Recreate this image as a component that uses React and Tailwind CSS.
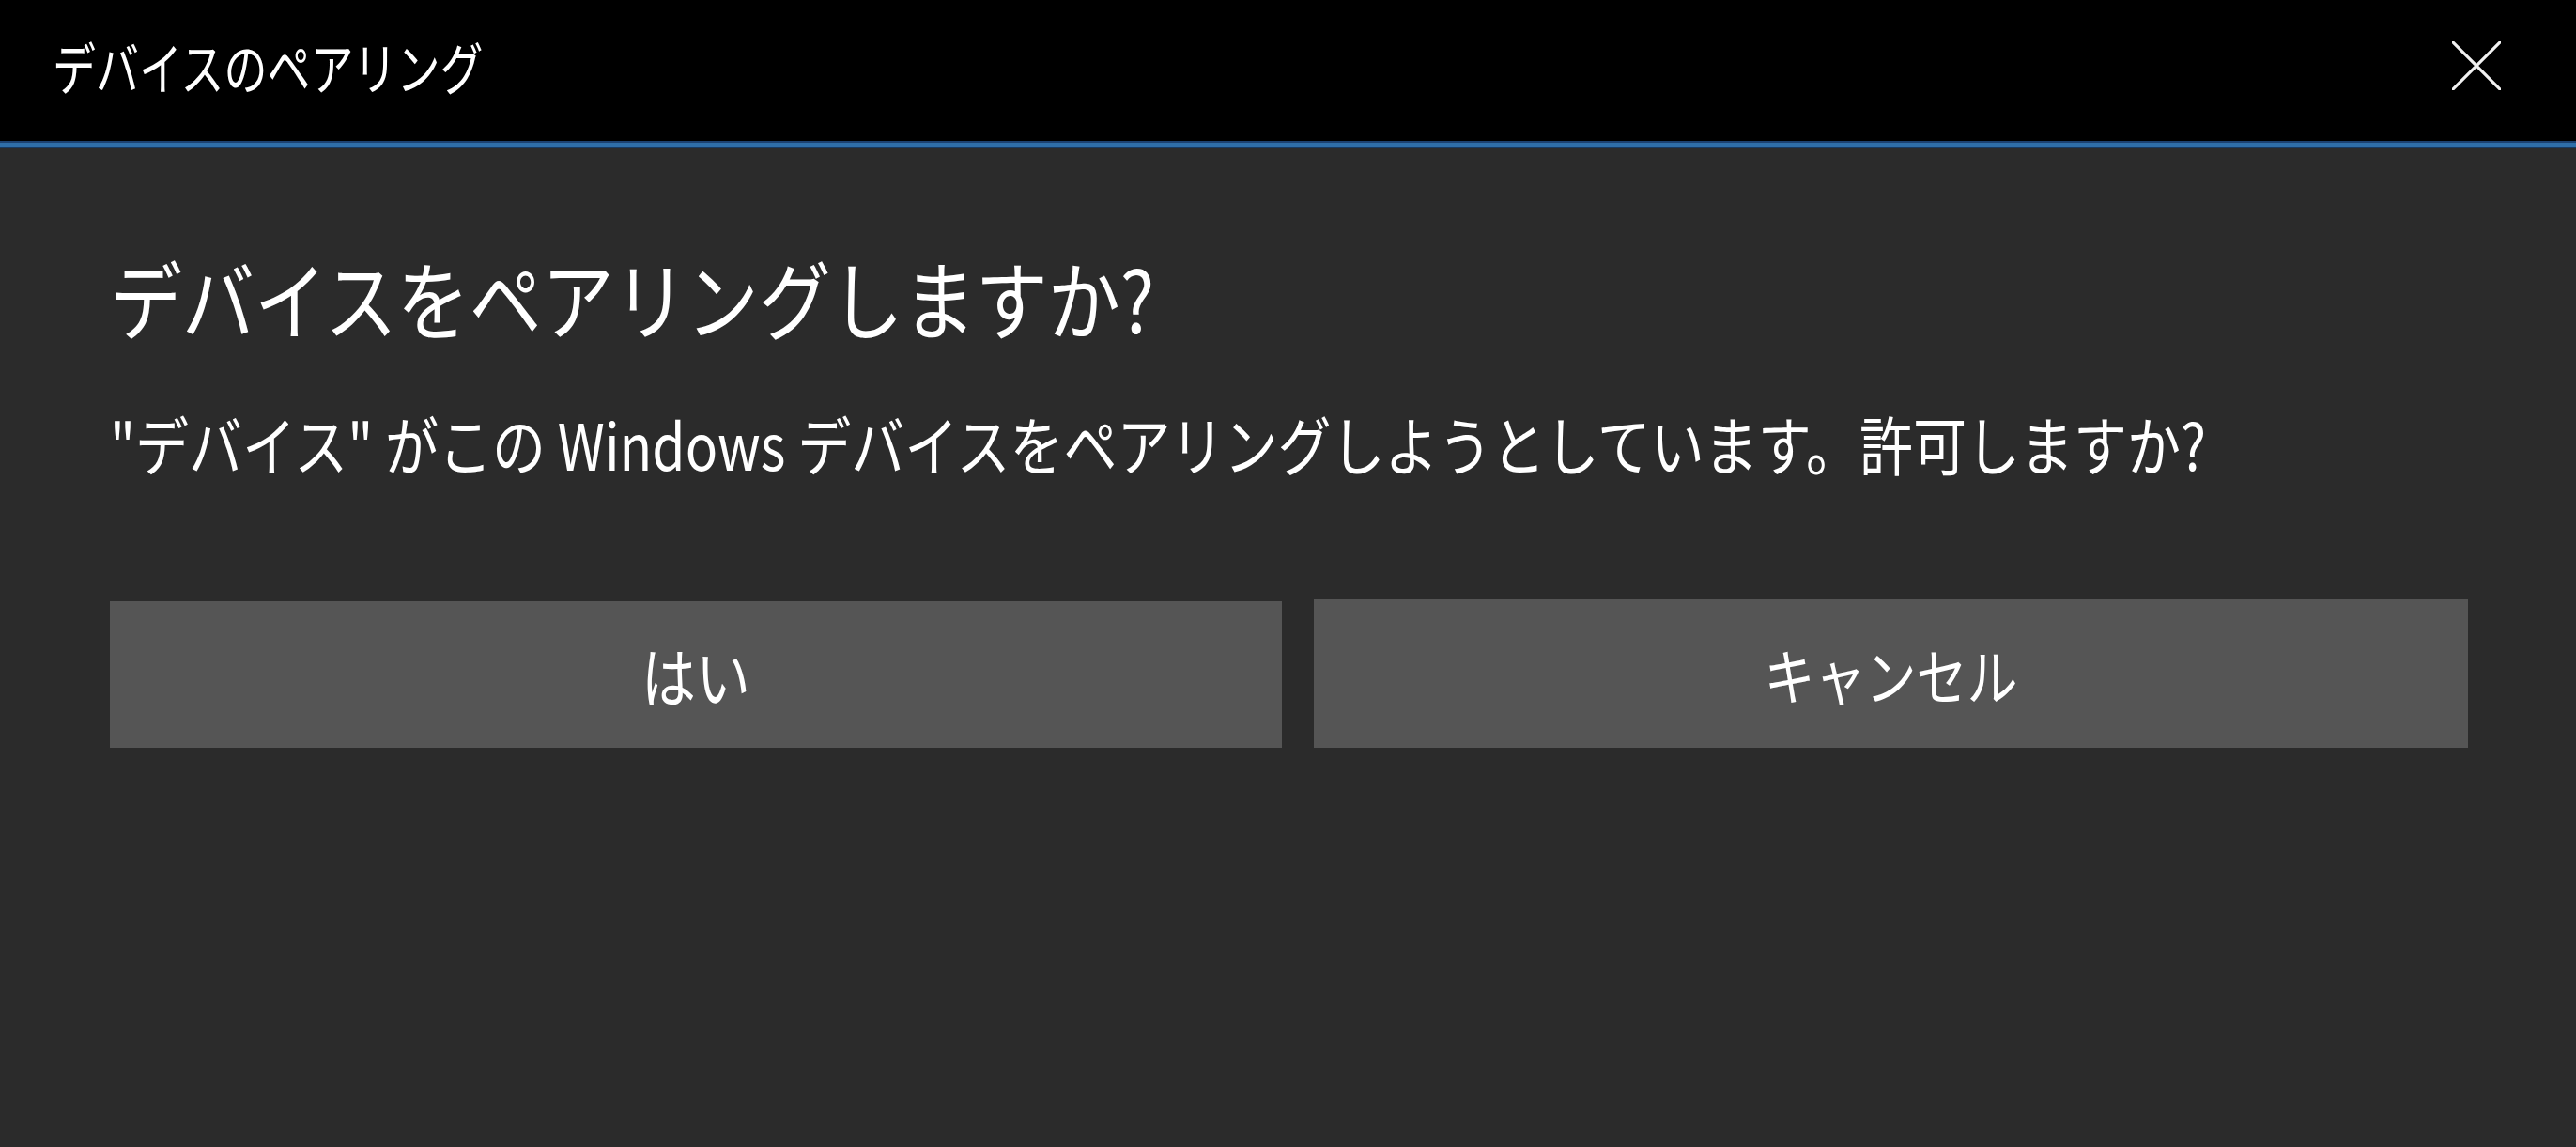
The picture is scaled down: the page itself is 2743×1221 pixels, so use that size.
export default function App() {
  const jp = { fontFamily: '"Noto Sans CJK JP", "Noto Sans", sans-serif' };

  return (
    <div
      className="w-[2743px] h-[1221px] bg-[#2b2b2b] flex flex-col overflow-hidden text-white"
      style={jp}
    >
      {/* title bar */}
      <div className="h-[150px] bg-black flex items-center justify-between pl-[56px] pr-[80px]">
        <span className="inline-block text-[46px] leading-none pb-[8px] text-white scale-y-[1.3] origin-center">
          デバイスのペアリング
        </span>
        <button className="w-[52px] h-[52px] flex items-center justify-center mb-[10px]">
          <svg width="52" height="52" viewBox="0 0 52 52" fill="none">
            <path d="M1 1 L51 51 M51 1 L1 51" stroke="#f2f2f2" strokeWidth="3.2" strokeLinecap="round" />
          </svg>
        </button>
      </div>
      <div className="h-[8px] bg-[#2f6ea8] border-t-[2px] border-b-[2px] border-t-[#1c4170] border-b-[#173a63]" />

      {/* content */}
      <div className="flex flex-col items-start px-[117px]">
        <h1 className="inline-block mt-[119px] text-[77px] leading-none font-normal whitespace-nowrap scale-y-[1.18] origin-center">
          デバイスをペアリングしますか?
        </h1>
        <p className="inline-block mt-[89px] text-[57px] leading-none whitespace-nowrap scale-y-[1.2] origin-center">
          "デバイス" がこの Windows デバイスをペアリングしようとしています。許可しますか?
        </p>
        <div className="mt-[140px] flex gap-[34px]">
          <button className="w-[1248px] h-[156px] bg-[#555555] flex items-center justify-center text-[58px] leading-none text-white">
            <span className="inline-block scale-y-[1.2]">はい</span>
          </button>
          <button className="w-[1229px] h-[158px] -mt-[2px] bg-[#555555] flex items-center justify-center text-[54px] leading-none text-white">
            <span className="inline-block scale-y-[1.2]">キャンセル</span>
          </button>
        </div>
      </div>
    </div>
  );
}
